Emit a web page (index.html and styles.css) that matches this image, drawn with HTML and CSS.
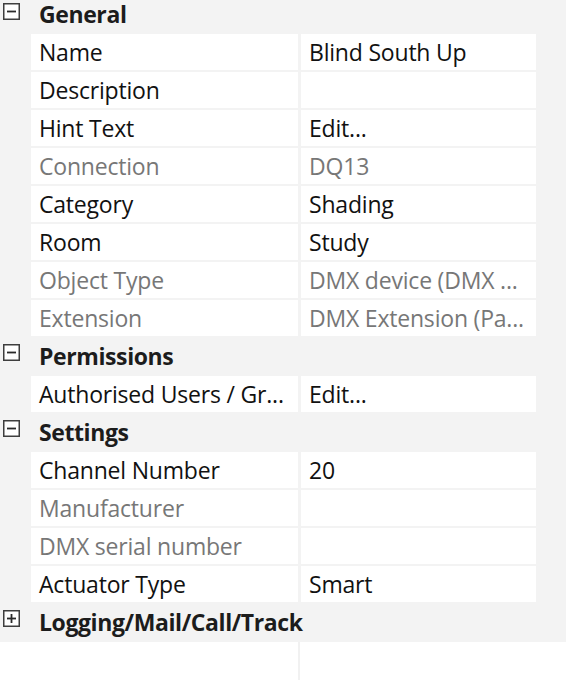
FILE: index.html
```html
<!DOCTYPE html>
<html>
<head>
<meta charset="utf-8">
<link rel="stylesheet" href="styles.css">
</head>
<body>
<div class="grid">
  <div class="cat first">
    <svg class="tog" width="17" height="17" viewBox="0 0 17 17"><rect x="0.75" y="0.75" width="15.5" height="15.5" fill="#fff" stroke="#3e3e3e" stroke-width="1.5"/><line x1="4" y1="8.5" x2="13" y2="8.5" stroke="#2a2a2a" stroke-width="1.8"/></svg>
    <span class="cat-label">General</span>
  </div>
  <div class="row"><div class="name">Name</div><div class="val">Blind South Up</div></div>
  <div class="row"><div class="name">Description</div><div class="val"></div></div>
  <div class="row"><div class="name">Hint Text</div><div class="val">Edit...</div></div>
  <div class="row dis"><div class="name">Connection</div><div class="val">DQ13</div></div>
  <div class="row"><div class="name">Category</div><div class="val">Shading</div></div>
  <div class="row"><div class="name">Room</div><div class="val">Study</div></div>
  <div class="row dis"><div class="name">Object Type</div><div class="val">DMX device (DMX ...</div></div>
  <div class="row dis"><div class="name">Extension</div><div class="val">DMX Extension (Pa...</div></div>
  <div class="cat">
    <svg class="tog" width="17" height="17" viewBox="0 0 17 17"><rect x="0.75" y="0.75" width="15.5" height="15.5" fill="#fff" stroke="#3e3e3e" stroke-width="1.5"/><line x1="4" y1="8.5" x2="13" y2="8.5" stroke="#2a2a2a" stroke-width="1.8"/></svg>
    <span class="cat-label">Permissions</span>
  </div>
  <div class="row"><div class="name">Authorised Users / Gr...</div><div class="val">Edit...</div></div>
  <div class="cat">
    <svg class="tog" width="17" height="17" viewBox="0 0 17 17"><rect x="0.75" y="0.75" width="15.5" height="15.5" fill="#fff" stroke="#3e3e3e" stroke-width="1.5"/><line x1="4" y1="8.5" x2="13" y2="8.5" stroke="#2a2a2a" stroke-width="1.8"/></svg>
    <span class="cat-label">Settings</span>
  </div>
  <div class="row"><div class="name">Channel Number</div><div class="val">20</div></div>
  <div class="row dis"><div class="name">Manufacturer</div><div class="val"></div></div>
  <div class="row dis"><div class="name">DMX serial number</div><div class="val"></div></div>
  <div class="row"><div class="name">Actuator Type</div><div class="val">Smart</div></div>
  <div class="cat">
    <svg class="tog" width="17" height="17" viewBox="0 0 17 17"><rect x="0.75" y="0.75" width="15.5" height="15.5" fill="#fff" stroke="#3e3e3e" stroke-width="1.5"/><line x1="4" y1="8.5" x2="13" y2="8.5" stroke="#2a2a2a" stroke-width="1.8"/><line x1="8.5" y1="4" x2="8.5" y2="13" stroke="#2a2a2a" stroke-width="1.8"/></svg>
    <span class="cat-label">Logging/Mail/Call/Track</span>
  </div>
</div>
<div class="empty"><div class="split"></div></div>
</body>
</html>
```

FILE: styles.css
```css
html, body {
  margin: 0;
  padding: 0;
  background: #ffffff;
}
body {
  font-family: "Open Sans", "Noto Sans", sans-serif;
  font-size: 23px;
  line-height: 26px;
  letter-spacing: -0.2px;
  color: #111111;
  width: 566px;
  height: 680px;
  overflow: hidden;
}
.grid {
  background: #f3f3f3;
  display: flex;
  flex-direction: column;
  gap: 2px;
  padding-bottom: 2px;
}
.row {
  display: flex;
  height: 36px;
  padding-left: 31px;
  padding-right: 30px;
}
.name, .val {
  background: #ffffff;
  display: flex;
  align-items: center;
  padding-left: 8px;
  white-space: nowrap;
  overflow: hidden;
  box-sizing: border-box;
}
.name {
  width: 267px;
}
.val {
  margin-left: 3px;
  flex: 1;
}
.dis .name, .dis .val {
  color: #777777;
}
.cat {
  display: flex;
  height: 36px;
  align-items: center;
  padding-left: 3px;
  box-sizing: border-box;
}
.cat.first {
  height: 32px;
  padding-bottom: 4px;
}
.tog {
  align-self: flex-start;
  margin-top: 6px;
  flex: none;
}
.cat.first .tog {
  margin-top: 3px;
}
.cat-label {
  margin-left: 19px;
  font-weight: 700;
  letter-spacing: -0.4px;
  color: #1c1c1c;
  white-space: nowrap;
}
.empty {
  height: 60px;
  background: #ffffff;
}
.split {
  margin-left: 298px;
  width: 2px;
  height: 100%;
  background: #f1f1f1;
}
```
